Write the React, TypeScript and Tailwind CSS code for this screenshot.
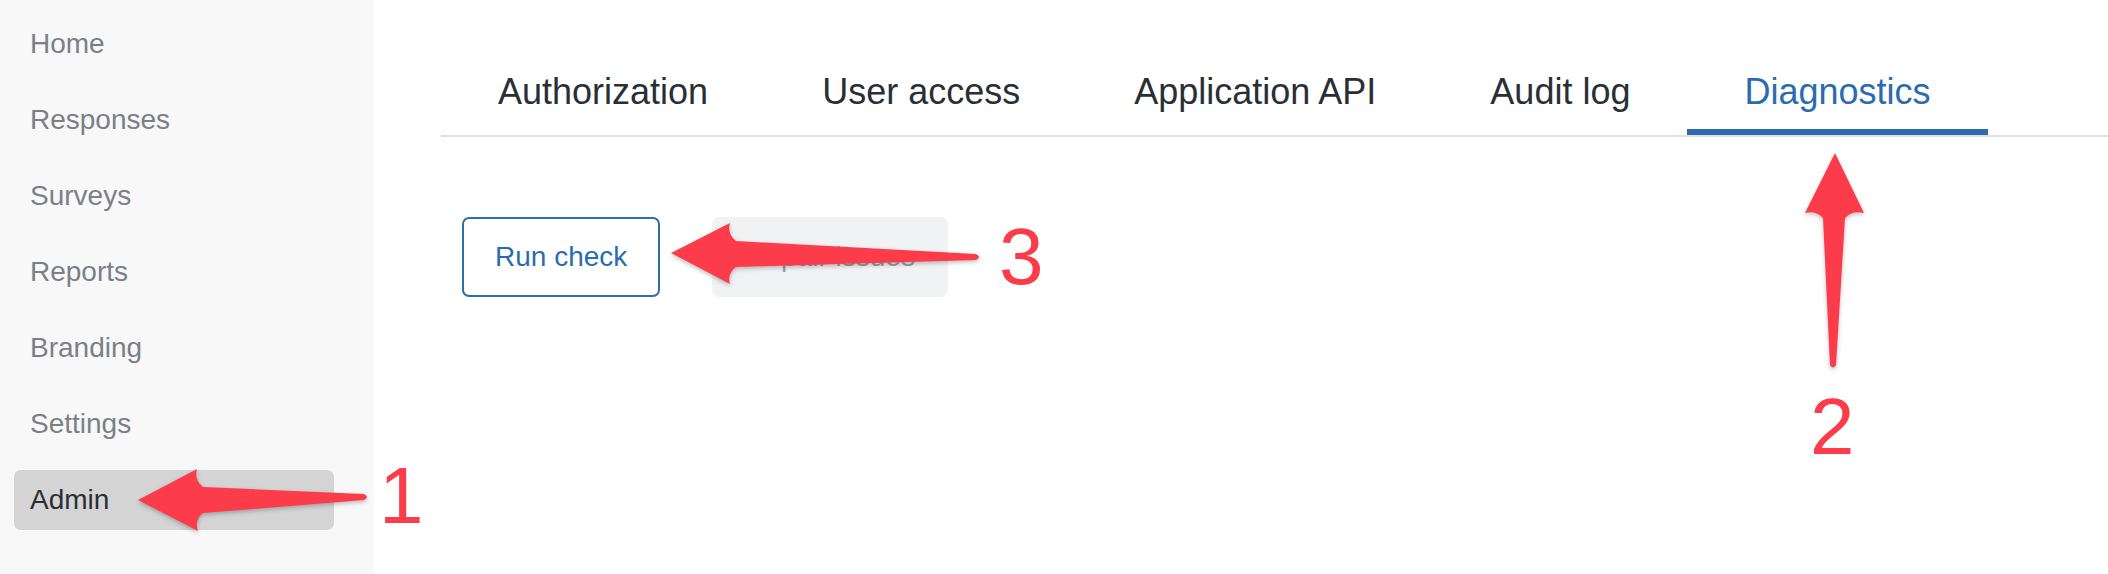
const navItems = ["Home", "Responses", "Surveys", "Reports", "Branding", "Settings", "Admin"];

const tabs = ["Authorization", "User access", "Application API", "Audit log", "Diagnostics"];

const font = { fontFamily: '"Liberation Sans", Arial, sans-serif' };

function Sidebar() {
  return (
    <aside className="w-[374px] shrink-0 bg-[#f8f8f8] pt-[14px]">
      <nav className="flex flex-col gap-[16px]">
        {navItems.map((item) => {
          const active = item === "Admin";
          return (
            <div
              key={item}
              className={
                active
                  ? "ml-[14px] mr-[40px] h-[60px] rounded-[7px] bg-[#d4d4d4] pl-[16px] text-[28px] leading-[60px] text-[#2a2f36]"
                  : "ml-[14px] mr-[40px] h-[60px] pl-[16px] text-[28px] leading-[60px] text-[#7b8087]"
              }
            >
              {item}
            </div>
          );
        })}
      </nav>
    </aside>
  );
}

function Tabs() {
  return (
    <div className="flex border-b-2 border-[#dfe0e2]">
      {tabs.map((tab) => {
        const active = tab === "Diagnostics";
        return (
          <div
            key={tab}
            className={
              active
                ? "border-b-[6px] border-[#2a6cae] px-[57px] pt-[15px] pb-[15px] text-[36px] leading-[44px] text-[#2a6cae]"
                : "border-b-[6px] border-transparent px-[57px] pt-[15px] pb-[15px] text-[36px] leading-[44px] text-[#2a2f36]"
            }
          >
            {tab}
          </div>
        );
      })}
    </div>
  );
}

// the red callout arrows drawn over the page
function Annotations() {
  return (
    <>
      <svg
        className="pointer-events-none absolute left-0 top-0 h-[574px] w-[2108px] drop-shadow-[0_2px_2px_rgba(0,0,0,0.25)]"
        viewBox="0 0 2108 574"
      >
        <path
          d="M138 500 L197 469 Q194 480 203 487 L364 494 Q370 497 364 500 L203 513 Q194 520 198 531 Z"
          fill="#fc3c4b"
        />
        <path
          d="M671 253 L730 223 Q727 234 736 241 L976 254 Q982 257 976 260 L736 267 Q727 274 730 284 Z"
          fill="#fc3c4b"
        />
        <path
          d="M1835 153 L1864 213 Q1852 210 1845 218 L1836 365 Q1833 370 1830 365 L1823 218 Q1816 210 1805 213 Z"
          fill="#fc3c4b"
        />
      </svg>
      <span className="pointer-events-none absolute left-[379px] top-[456px] text-[80px] leading-[80px] text-[#fc3c4b]">1</span>
      <span className="pointer-events-none absolute left-[1810px] top-[387px] text-[80px] leading-[80px] text-[#fc3c4b]">2</span>
      <span className="pointer-events-none absolute left-[999px] top-[217px] text-[80px] leading-[80px] text-[#fc3c4b]">3</span>
    </>
  );
}

export default function App() {
  return (
    <div className="relative flex h-[574px] w-[2108px] overflow-hidden bg-white" style={font}>
      <Sidebar />
      <main className="flex-1 pl-[67px] pt-[55px]">
        <Tabs />
        <div className="ml-[21px] mt-[80px] flex gap-[52px]">
          <button
            type="button"
            className="flex h-[80px] items-center rounded-[7px] border-2 border-[#2f6ea9] bg-white px-[31px] text-[28px] text-[#2a6cae]"
          >
            Run check
          </button>
          <button
            type="button"
            className="flex h-[80px] items-center rounded-[7px] border-2 border-transparent bg-[#f1f2f4] px-[31px] text-[28px] text-[#9a9ea4]"
          >
            Repair issues
          </button>
        </div>
      </main>
      <Annotations />
    </div>
  );
}
